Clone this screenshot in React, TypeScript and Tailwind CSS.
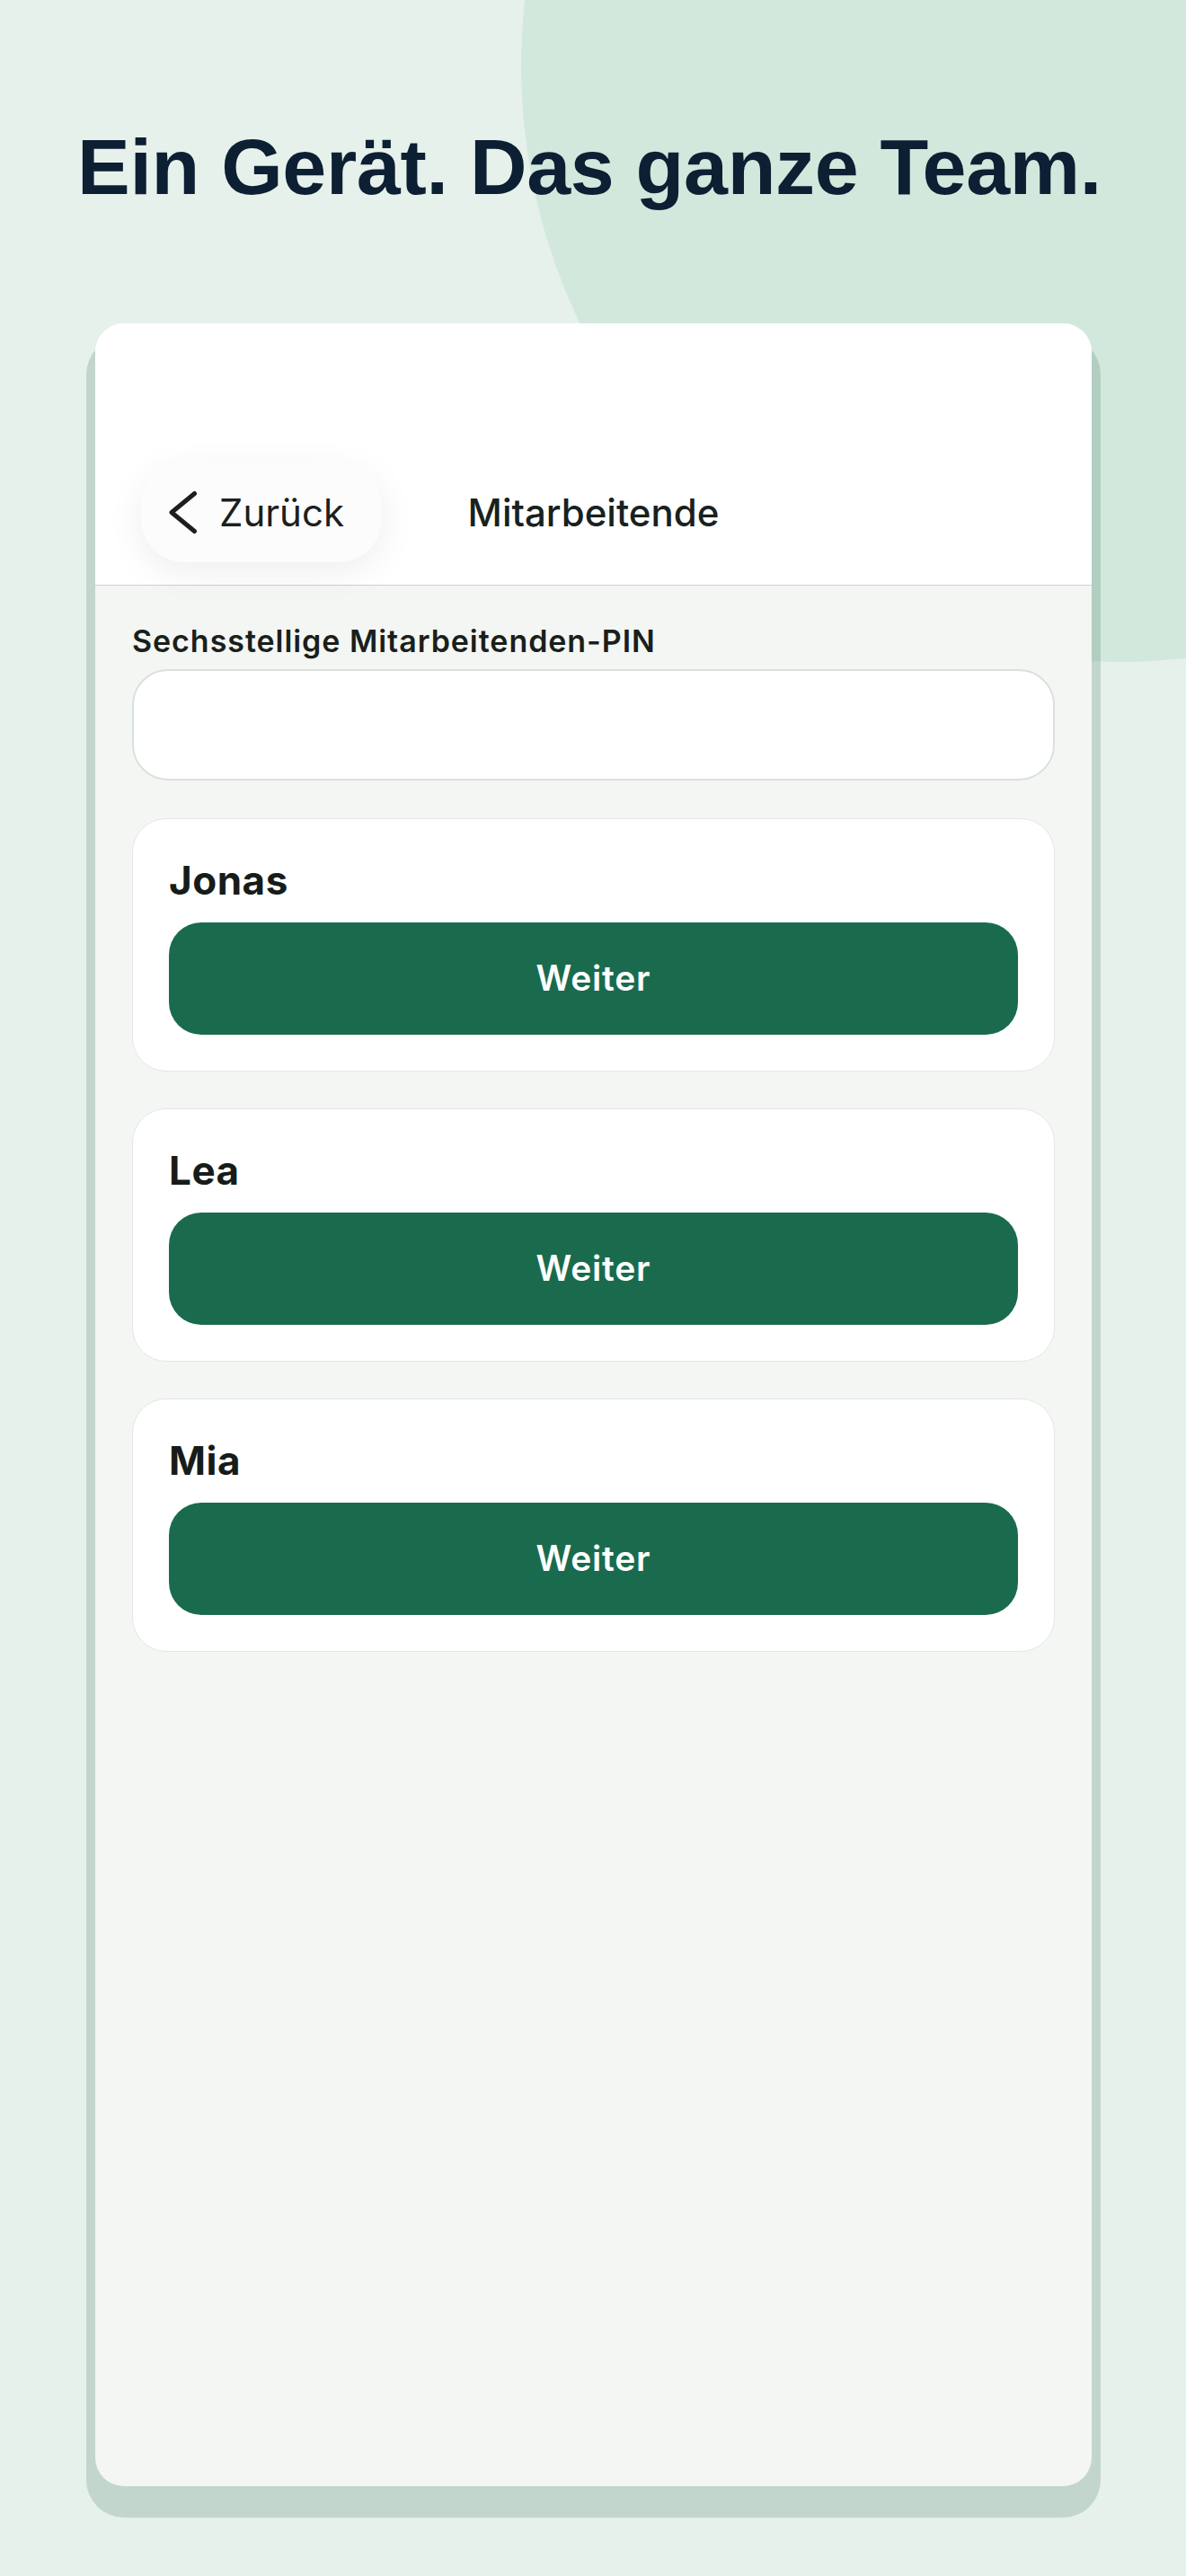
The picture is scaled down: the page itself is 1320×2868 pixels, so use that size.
import React from "react";

const names = ["Jonas", "Lea", "Mia"];

export default function App() {
  return (
    <div
      className="relative h-[2868px] w-[1320px] overflow-hidden bg-[#e6f1eb]"
      style={{ fontFamily: "Inter, 'Noto Sans', sans-serif" }}
    >
      <div className="absolute left-[580px] top-[-591px] h-[1328px] w-[1328px] rounded-full bg-[#d2e8dc]" />

      <div className="relative flex flex-col">
        <h1
          className="pr-[8px] pt-[142px] text-center text-[88px] font-bold leading-[88px] tracking-[-0.3px] text-[#0c1f33]"
          style={{ fontFamily: "'Liberation Sans', Arial, sans-serif" }}
        >
          Ein Gerät. Das ganze Team.
        </h1>

        <div className="ml-[106px] mt-[130px] flex h-[2408px] w-[1109px] flex-col overflow-hidden rounded-[32px] bg-[#f4f6f3] shadow-[0_25px_0_10px_rgba(3,61,35,0.15)]">
          <div className="grid grid-cols-[1fr_auto_1fr] items-center border-b-[1.5px] border-[#cdd1ce] bg-white pb-[25px] pt-[155px]">
            <div className="pl-[51px]">
              <div className="flex h-[111px] w-[268px] items-center rounded-[48px] bg-[#fcfcfc] pl-[31px] shadow-[0_10px_40px_rgba(0,0,0,0.07)]">
                <svg width="32" height="49" viewBox="0 0 32 49" fill="none">
                  <path
                    d="M28.5 3.5 L3 24.5 L28.5 45.5"
                    stroke="#1c1f1e"
                    strokeWidth="5"
                    strokeLinecap="round"
                    strokeLinejoin="round"
                  />
                </svg>
                <span className="ml-[24px] text-[42px] font-normal leading-none text-[#1c1f1e]">
                  Zurück
                </span>
              </div>
            </div>
            <div className="text-[42px] font-medium leading-none text-[#1a211d]">
              Mitarbeitende
            </div>
            <div />
          </div>

          <div className="flex flex-col px-[41px] pt-[41px]">
            <label className="text-[34px] font-semibold leading-[41px] tracking-[0.95px] text-[#1a1f1c]">
              Sechsstellige Mitarbeitenden-PIN
            </label>
            <div className="mt-[11px] h-[124px] rounded-[40px] border-2 border-[#dae1dc] bg-white" />

            <div className="mt-[42px] flex flex-col gap-[41px]">
              {names.map((n) => (
                <div
                  key={n}
                  className="flex h-[282px] flex-col rounded-[38px] border border-[#e3e8e5] bg-white px-[40px] pb-[40px] pt-[42px]"
                >
                  <div className="h-[53px] text-[44px] font-bold leading-[53px] tracking-[0.5px] text-[#161c19]">
                    {n}
                  </div>
                  <button className="mt-[20px] flex h-[125px] w-full items-center justify-center rounded-[36px] bg-[#1a6b4d] text-[39px] font-semibold tracking-[0.8px] text-white">
                    Weiter
                  </button>
                </div>
              ))}
            </div>
          </div>
        </div>
      </div>
    </div>
  );
}
